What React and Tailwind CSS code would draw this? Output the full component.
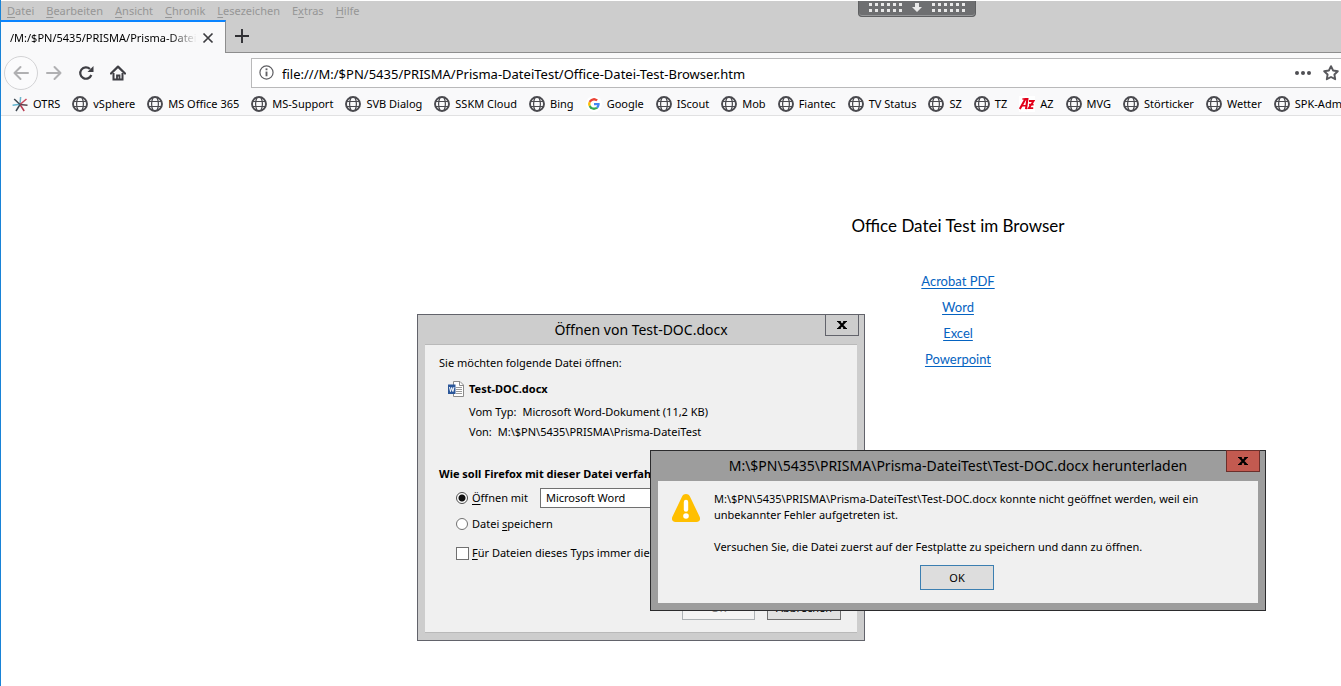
const MENU = [
  ['', 'D', 'atei'],
  ['', 'B', 'earbeiten'],
  ['', 'A', 'nsicht'],
  ['', 'C', 'hronik'],
  ['', 'L', 'esezeichen'],
  ['E', 'x', 'tras'],
  ['', 'H', 'ilfe'],
];

const BOOKMARKS = [
  ['OTRS', 'otrs'],
  ['vSphere'],
  ['MS Office 365'],
  ['MS-Support'],
  ['SVB Dialog'],
  ['SSKM Cloud'],
  ['Bing'],
  ['Google', 'google'],
  ['IScout'],
  ['Mob'],
  ['Fiantec'],
  ['TV Status'],
  ['SZ'],
  ['TZ'],
  ['AZ', 'az'],
  ['MVG'],
  ['Störticker'],
  ['Wetter'],
  ['SPK-Admin'],
];

const LINKS = ['Acrobat PDF', 'Word', 'Excel', 'Powerpoint'];

function GlobeIcon() {
  return (
    <svg viewBox="0 0 16 16" className="size-4 shrink-0" fill="none" stroke="#4a4a4f" aria-hidden="true">
      <circle cx="8" cy="8" r="7" strokeWidth="1.900" />
      <path d="M6 1.400C4.200 5.600 4.200 10.400 6 14.600M10 1.400c1.800 4.200 1.800 9 0 13.200" strokeWidth="1.200" />
      <path d="M1.400 5.500h13.200M1.400 10.500h13.200" strokeWidth="1.100" />
    </svg>
  );
}

function OtrsIcon() {
  return (
    <svg viewBox="0 0 16 16" className="size-4 shrink-0" fill="none" strokeWidth="1.500" aria-hidden="true">
      <path d="M8 8L8.600 1" stroke="#6fb4cc" />
      <path d="M8 8.500L14.500 3" stroke="#c8465a" />
      <path d="M8 8.500l7.500.7" stroke="#5a4650" />
      <path d="M8 8.500l4.200 6.500" stroke="#b83a50" />
      <path d="M8 8.500L4 15" stroke="#3d4750" />
      <path d="M8 8.300L.6 9.200" stroke="#5fb4d0" />
      <path d="M8 8.500L2.200 3" stroke="#3d4750" />
    </svg>
  );
}

function GoogleIcon() {
  return (
    <svg viewBox="0 0 48 48" className="size-4 shrink-0 rounded-full bg-white p-[2px]" aria-hidden="true">
      <path fill="#ea4335" d="M24 9.500c3.540 0 6.710 1.220 9.210 3.600l6.850-6.850C35.900 2.380 30.470 0 24 0 14.620 0 6.510 5.380 2.560 13.220l7.980 6.190C12.430 13.720 17.740 9.500 24 9.500z" />
      <path fill="#4285f4" d="M46.980 24.550c0-1.570-.15-3.090-.38-4.550H24v9.020h12.940c-.58 2.960-2.260 5.480-4.780 7.180l7.730 6c4.510-4.180 7.090-10.360 7.090-17.650z" />
      <path fill="#fbbc05" d="M10.530 28.590c-.48-1.450-.76-2.990-.76-4.590s.27-3.140.76-4.590l-7.980-6.190C.92 16.460 0 20.120 0 24c0 3.880.92 7.540 2.560 10.780l7.970-6.190z" />
      <path fill="#34a853" d="M24 48c6.480 0 11.930-2.130 15.890-5.810l-7.730-6c-2.150 1.450-4.920 2.300-8.160 2.300-6.260 0-11.570-4.220-13.470-9.910l-7.980 6.190C6.510 42.620 14.620 48 24 48z" />
    </svg>
  );
}

function AzIcon() {
  return (
    <svg viewBox="0 0 16 16" className="size-4 shrink-0 bg-white" fill="none" stroke="#e2001a" aria-hidden="true">
      <path d="M.8 13L6.400 3h2L7 13.200" strokeWidth="2.100" />
      <path d="M2.200 9.800h5.600M3.400 3h5" strokeWidth="1.500" />
      <path d="M10 5h4.600L9.800 12.200h4.400M10 8.600h4.600" strokeWidth="1.800" />
    </svg>
  );
}

function BookmarkIcon({ kind }) {
  if (kind === 'otrs') return <OtrsIcon />;
  if (kind === 'google') return <GoogleIcon />;
  if (kind === 'az') return <AzIcon />;
  return <GlobeIcon />;
}

function CloseGlyph() {
  return (
    <svg viewBox="0 0 10 8" className="h-2 w-[10px]" fill="none" stroke="#000" aria-hidden="true">
      <path d="M1.700.5l6.600 7M8.300.5l-6.600 7" strokeWidth="2.200" />
      <path d="M0 .5h3.800M6.200.5H10M0 7.500h3.800M6.200 7.500H10" strokeWidth="1" />
    </svg>
  );
}

function RemoteHandle() {
  const cols = [0, 1, 2, 3, 4, 5];
  return (
    <div className="absolute top-px left-[857px] flex h-4 w-[118px] items-start justify-center rounded-b border border-t-0 border-[#5f6062] bg-[#6e6f71] pt-px shadow-[inset_0_-1px_0_#97989a]">
      <svg viewBox="0 0 98 12" className="h-3 w-[98px]" fill="#e9e9e9" aria-hidden="true">
        {cols.map((c) => (
          <g key={c}>
            <rect x={1 + c * 6} y="1" width="3" height="3" />
            <rect x={1 + c * 6} y="7" width="3" height="3" />
            <rect x={64 + c * 6} y="1" width="3" height="3" />
            <rect x={64 + c * 6} y="7" width="3" height="3" />
          </g>
        ))}
        <path d="M47 1h4v4h3l-5 5-5-5h3z" />
      </svg>
    </div>
  );
}

function Chrome() {
  return (
    <header className="relative text-[11px] leading-4">
      <nav className="flex h-5 items-center gap-3 border-t border-white bg-[#cdcdcd] pl-[6px] text-[#969696]">
        {MENU.map(([pre, key, post]) => (
          <button key={key + post} type="button">
            {pre}
            <u className="underline-offset-2">{key}</u>
            {post}
          </button>
        ))}
      </nav>
      <div className="flex h-[33px] items-stretch border-b border-[#8d8d8d] bg-[#cdcdcd]">
        <div className="-mb-px flex w-[225px] items-center border-t-2 border-r border-t-[#0a84ff] border-r-[#8d8d8d] bg-[#f9f9fa] pl-[9px]">
          <span className="w-[186px] overflow-hidden whitespace-nowrap text-black [mask-image:linear-gradient(to_right,black_160px,transparent_187px)]">
            /M:/$PN/5435/PRISMA/Prisma-DateiTest
          </span>
          <button type="button" aria-label="Tab schließen" className="ml-[6px]">
            <svg viewBox="0 0 12 12" className="size-3" stroke="#3c3c40" strokeWidth="1.700" aria-hidden="true">
              <path d="M1.500 1.500l9 9M10.500 1.500l-9 9" />
            </svg>
          </button>
        </div>
        <button type="button" aria-label="Neuer Tab" className="ml-[9px] flex items-center">
          <svg viewBox="0 0 14 14" className="size-[14px]" stroke="#2f2f33" strokeWidth="1.900" aria-hidden="true">
            <path d="M7 0v14M0 7h14" />
          </svg>
        </button>
      </div>
      <div className="flex h-[39px] items-center bg-[#f9f9fa] pl-[3px]">
        <button type="button" aria-label="Zurück" className="flex size-[34px] shrink-0 items-center justify-center rounded-full border border-[#d3d3d5] bg-[#fbfbfc]">
          <svg viewBox="0 0 16 16" className="size-4" fill="none" stroke="#b0b0b2" strokeWidth="2" strokeLinecap="round" strokeLinejoin="round" aria-hidden="true">
            <path d="M15 8H1.500M7.500 2l-6 6 6 6" />
          </svg>
        </button>
        <button type="button" aria-label="Vor" className="ml-2">
          <svg viewBox="0 0 16 16" className="size-4" fill="none" stroke="#b0b0b2" strokeWidth="2" strokeLinecap="round" strokeLinejoin="round" aria-hidden="true">
            <path d="M1 8h13.500M8.500 2l6 6-6 6" />
          </svg>
        </button>
        <button type="button" aria-label="Neu laden" className="ml-4">
          <svg viewBox="0 0 16 16" className="size-4" fill="none" stroke="#3f3f44" strokeWidth="2.200" aria-hidden="true">
            <path d="M13.300 10A5.700 5.700 0 1 1 12 4" />
            <path d="M15.500 1v6h-6z" fill="#3f3f44" stroke="none" />
          </svg>
        </button>
        <button type="button" aria-label="Startseite" className="ml-4">
          <svg viewBox="0 0 16 16" className="size-4" fill="none" stroke="#3f3f44" aria-hidden="true">
            <path d="M1 8.500L8 1.600l7 6.900" strokeWidth="2.200" strokeLinecap="round" strokeLinejoin="round" />
            <path d="M3.500 8v6.500h9V8" strokeWidth="2" />
            <path d="M7 15v-4.500h2.500V15" strokeWidth="1.800" />
          </svg>
        </button>
        <div className="-mr-2 ml-[125px] flex h-[30px] flex-1 items-center border border-[#b9b9ba] bg-white pl-[7px]">
          <svg viewBox="0 0 16 16" className="size-[15px] shrink-0" fill="none" stroke="#5f5f63" aria-hidden="true">
            <circle cx="8" cy="8" r="7" strokeWidth="1.300" />
            <path d="M8 7v5" strokeWidth="2" />
            <path d="M8 3.600v2" strokeWidth="2" />
          </svg>
          <input
            type="text"
            aria-label="Adresse"
            defaultValue="file:///M:/$PN/5435/PRISMA/Prisma-DateiTest/Office-Datei-Test-Browser.htm"
            className="ml-2 h-6 min-w-0 flex-1 bg-transparent pt-[2px] text-[13px] text-black outline-none"
          />
          <button type="button" aria-label="Seitenaktionen" className="mr-3">
            <svg viewBox="0 0 16 16" className="size-4" fill="#4f4f53" aria-hidden="true">
              <circle cx="2" cy="8" r="2" />
              <circle cx="8" cy="8" r="2" />
              <circle cx="14" cy="8" r="2" />
            </svg>
          </button>
          <button type="button" aria-label="Lesezeichen hinzufügen" className="mr-[9px]">
            <svg viewBox="0 0 16 16" className="size-4" fill="none" stroke="#58585c" strokeWidth="1.900" strokeLinejoin="round" aria-hidden="true">
              <path d="M8 1.200l2.100 4.300 4.700.7-3.400 3.300.8 4.700L8 12l-4.200 2.200.8-4.700L1.200 6.200l4.700-.7z" />
            </svg>
          </button>
        </div>
      </div>
      <div className="flex h-6 items-center gap-3 overflow-hidden border-b border-[#e1e1e2] bg-[#f9f9fa] pl-[11px]">
        {BOOKMARKS.map(([name, kind]) => (
          <a key={name} href="#" className="flex shrink-0 items-center gap-[5px] whitespace-nowrap text-black">
            <BookmarkIcon kind={kind} />
            {name}
          </a>
        ))}
      </div>
      <RemoteHandle />
    </header>
  );
}

function OpenDialog() {
  return (
    <section className="absolute top-[314px] left-[416px] w-[448px] border border-[#62636b] bg-[#cdcdcd] px-[7px] pb-[7px] text-[11px] leading-4">
      <header className="relative flex h-[29px] items-center justify-center text-sm">
        Öffnen von Test-DOC.docx
        <button type="button" aria-label="Schließen" className="absolute -top-px -right-[2px] flex h-[22px] w-[34px] items-center justify-center border border-[#62636b]">
          <CloseGlyph />
        </button>
      </header>
      <div className="border-y border-[#b9b9b9] bg-[#f0f0f0] px-[14px] pt-[10px] pb-3">
        <p>Sie möchten folgende Datei öffnen:</p>
        <div className="mt-[10px] flex items-center gap-[5px] pl-[9px] font-bold">
          <svg viewBox="0 0 16 16" className="size-4" aria-hidden="true">
            <path d="M5.500.5h6.500l3.500 3.500v11.500h-10z" fill="#fff" stroke="#8b8b8b" />
            <path d="M11.500.5v4h4" fill="none" stroke="#8b8b8b" />
            <path d="M8 6.500h6M8 8.500h6M8 10.500h6M8 12.500h6" stroke="#9a9a9a" />
            <path d="M0 3.500h7.500v9.500H0z" fill="#2b579a" />
            <path d="M1.500 6l1 4.500 1.200-4 1.200 4L6 6" fill="none" stroke="#fff" />
          </svg>
          Test-DOC.docx
        </div>
        <dl className="mt-[7px] flex flex-col gap-1 pl-[30px]">
          <div className="flex gap-[6px]">
            <dt>Vom Typ:</dt>
            <dd>Microsoft Word-Dokument (11,2 KB)</dd>
          </div>
          <div className="flex gap-[6px]">
            <dt>Von:</dt>
            <dd>M:\$PN\5435\PRISMA\Prisma-DateiTest</dd>
          </div>
        </dl>
        <p className="mt-[26px] font-bold">Wie soll Firefox mit dieser Datei verfahren?</p>
        <div className="mt-[6px] flex flex-col pl-[17px]">
          <div className="flex h-5 items-center">
            <input id="open-with" type="radio" name="action" defaultChecked className="size-3 appearance-none rounded-full border border-[#4d4d4d] bg-white checked:bg-[radial-gradient(circle,#111_3px,#fff_4px)]" />
            <label htmlFor="open-with" className="ml-1">
              <u className="underline-offset-2">Ö</u>ffnen mit
            </label>
            <select aria-label="Anwendung" className="ml-3 h-5 flex-1 appearance-none border border-[#707070] bg-white pl-[5px] text-[11px]">
              <option>Microsoft Word</option>
            </select>
          </div>
          <div className="mt-2 flex h-4 items-center">
            <input id="save-file" type="radio" name="action" className="size-3 appearance-none rounded-full border border-[#707070] bg-white" />
            <label htmlFor="save-file" className="ml-1">
              Datei <u className="underline-offset-2">s</u>peichern
            </label>
          </div>
          <div className="mt-[13px] flex h-4 items-center">
            <input id="always" type="checkbox" className="size-[13px] appearance-none border border-[#707070] bg-white" />
            <label htmlFor="always" className="ml-[3px]">
              <u className="underline-offset-2">F</u>ür Dateien dieses Typs immer diese Aktion ausführen
            </label>
          </div>
        </div>
        <div className="mt-[34px] flex justify-end gap-3 pr-[2px]">
          <button type="button" disabled className="h-[25px] w-[73px] border border-[#adb2b5] bg-[#f4f4f4] text-[#838383]">
            OK
          </button>
          <button type="button" className="h-[25px] w-[74px] border border-[#707070] bg-[#e0e0e0]">
            Abbrechen
          </button>
        </div>
      </div>
    </section>
  );
}

function ErrorDialog() {
  return (
    <section className="absolute top-[450px] left-[649px] w-[616px] border border-[#2b2b2d] bg-[#9d9d9d] px-[7px] pb-[7px] text-[11px] leading-4">
      <header className="relative flex h-[30px] items-center justify-center text-sm">
        M:\$PN\5435\PRISMA\Prisma-DateiTest\Test-DOC.docx herunterladen
        <button type="button" aria-label="Schließen" className="absolute -top-px -right-[2px] flex h-[22px] w-[34px] items-center justify-center border border-[#6b2f2b] bg-[#c35a50]">
          <CloseGlyph />
        </button>
      </header>
      <div className="bg-[#f0f0f0] px-[14px] pt-[10px] pb-[13px]">
        <div className="flex gap-[14px]">
          <svg viewBox="0 0 28 28" className="mt-[3px] size-7 shrink-0" aria-hidden="true">
            <path d="M14 0c1.700 0 3 .8 3.800 2.300l9.700 20.200C29 25.600 27.500 28 24.500 28h-21C.5 28-1 25.600.5 22.500L10.200 2.300C11 .8 12.300 0 14 0z" fill="#ffbf00" />
            <path d="M14 8v7.500" stroke="#fff" strokeWidth="4.400" strokeLinecap="round" />
            <circle cx="14" cy="22" r="2.800" fill="#fff" />
          </svg>
          <div className="max-w-[520px]">
            <p>M:\$PN\5435\PRISMA\Prisma-DateiTest\Test-DOC.docx konnte nicht geöffnet werden, weil ein unbekannter Fehler aufgetreten ist.</p>
            <p className="mt-4">Versuchen Sie, die Datei zuerst auf der Festplatte zu speichern und dann zu öffnen.</p>
          </div>
        </div>
        <div className="mt-[10px] flex justify-center pr-[2px]">
          <button type="button" className="h-[25px] w-[74px] border border-[#3c7fb1] bg-[#dddddd]">
            OK
          </button>
        </div>
      </div>
    </section>
  );
}

export default function App() {
  return (
    <div className="relative min-h-screen overflow-hidden border-l border-[#1883d7] bg-white font-['Noto_Sans','Open_Sans',sans-serif] text-black">
      <Chrome />
      <main className="flex flex-col items-center pt-[98px] pl-[574px] font-[Lato,'Open_Sans',sans-serif]">
        <h1 className="text-[17px] leading-6">Office Datei Test im Browser</h1>
        <ul className="mt-[30px] flex flex-col items-center text-center text-[13px] leading-[26px]">
          {LINKS.map((name) => (
            <li key={name}>
              <a href="#" className="text-[#0563c1] underline underline-offset-2">
                {name}
              </a>
            </li>
          ))}
        </ul>
      </main>
      <OpenDialog />
      <ErrorDialog />
    </div>
  );
}
